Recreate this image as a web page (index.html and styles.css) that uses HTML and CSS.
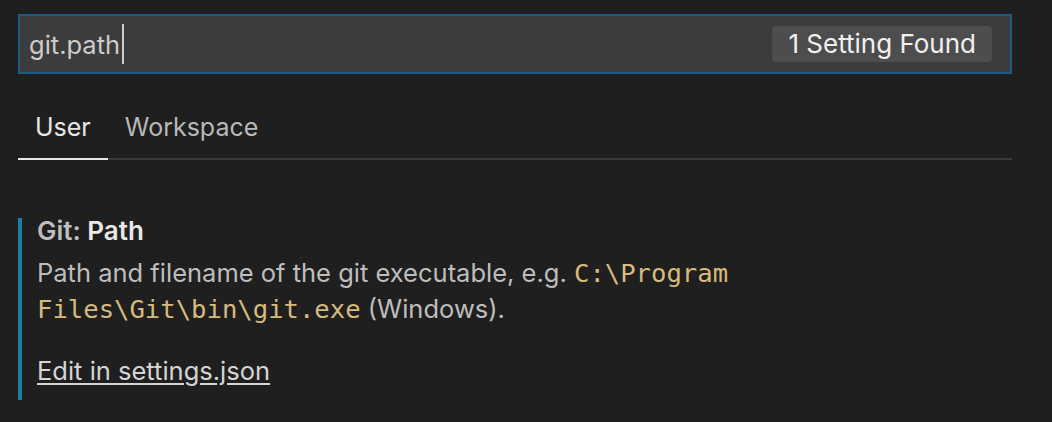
FILE: index.html
```html
<!DOCTYPE html>
<html>
<head>
<meta charset="utf-8">
<link rel="stylesheet" href="styles.css">
</head>
<body>
<div class="page">
  <div class="search">
    <span class="query">git.path</span><span class="caret"></span>
    <span class="count">1 Setting Found</span>
  </div>
  <div class="tabs">
    <div class="tab active">User</div>
    <div class="tab">Workspace</div>
  </div>
  <div class="setting">
    <div class="title"><span class="cat">Git: </span><span class="name">Path</span></div>
    <div class="desc">Path and filename of the git executable, e.g. <code>C:\Program Files\Git\bin\git.exe</code> (Windows).</div>
    <a class="edit" href="#">Edit in settings.json</a>
  </div>
</div>
</body>
</html>
```
FILE: styles.css
```css
html, body {
  margin: 0;
  padding: 0;
  background: #1f1f1f;
}
.page {
  padding: 14px 40px 0 18px;
  font-family: "Inter", "Noto Sans", sans-serif;
  color: #cccccc;
}
.search {
  height: 56px;
  border: 2px solid #1b5b86;
  background: #3c3c3c;
  display: flex;
  align-items: center;
  padding: 0 18px 0 9px;
}
.query {
  font-size: 25.5px;
  color: #cccccc;
}
.caret {
  width: 2px;
  height: 40px;
  background: #cccccc;
  margin-left: 2px;
}
.count {
  margin-left: auto;
  background: #4d4d4d;
  color: #f0f0f0;
  font-size: 26px;
  height: 36px;
  line-height: 36px;
  padding: 0 16px;
  border-radius: 4px;
}
.tabs {
  display: flex;
  margin-top: 28px;
  border-bottom: 2px solid #3a3a3a;
}
.tab {
  font-size: 25px;
  line-height: 30px;
  padding: 10px 17px 16px 17px;
  color: #b8b8b8;
  margin-bottom: -2px;
  border-bottom: 2px solid transparent;
}
.tab.active {
  color: #e6e6e6;
  border-bottom-color: #e6e6e6;
}
.setting {
  margin-top: 58px;
  border-left: 4px solid #1a7fa4;
  padding: 0 0 13px 15px;
}
.title {
  font-size: 26px;
  font-weight: 600;
  line-height: 26px;
}
.cat {
  color: #bdbdbd;
}
.name {
  color: #e8e8e8;
}
.desc {
  margin-top: 11px;
  font-size: 25.5px;
  line-height: 36px;
  color: #bdbdbd;
  width: 720px;
}
.desc code {
  font-family: "DejaVu Sans Mono", monospace;
  font-size: 25.6px;
  line-height: 1;
  color: #d7ba7d;
}
.edit {
  display: inline-block;
  margin-top: 28px;
  font-size: 25.5px;
  line-height: 32px;
  color: #d4d4d4;
  text-decoration: underline;
  text-underline-offset: 3px;
}
```
